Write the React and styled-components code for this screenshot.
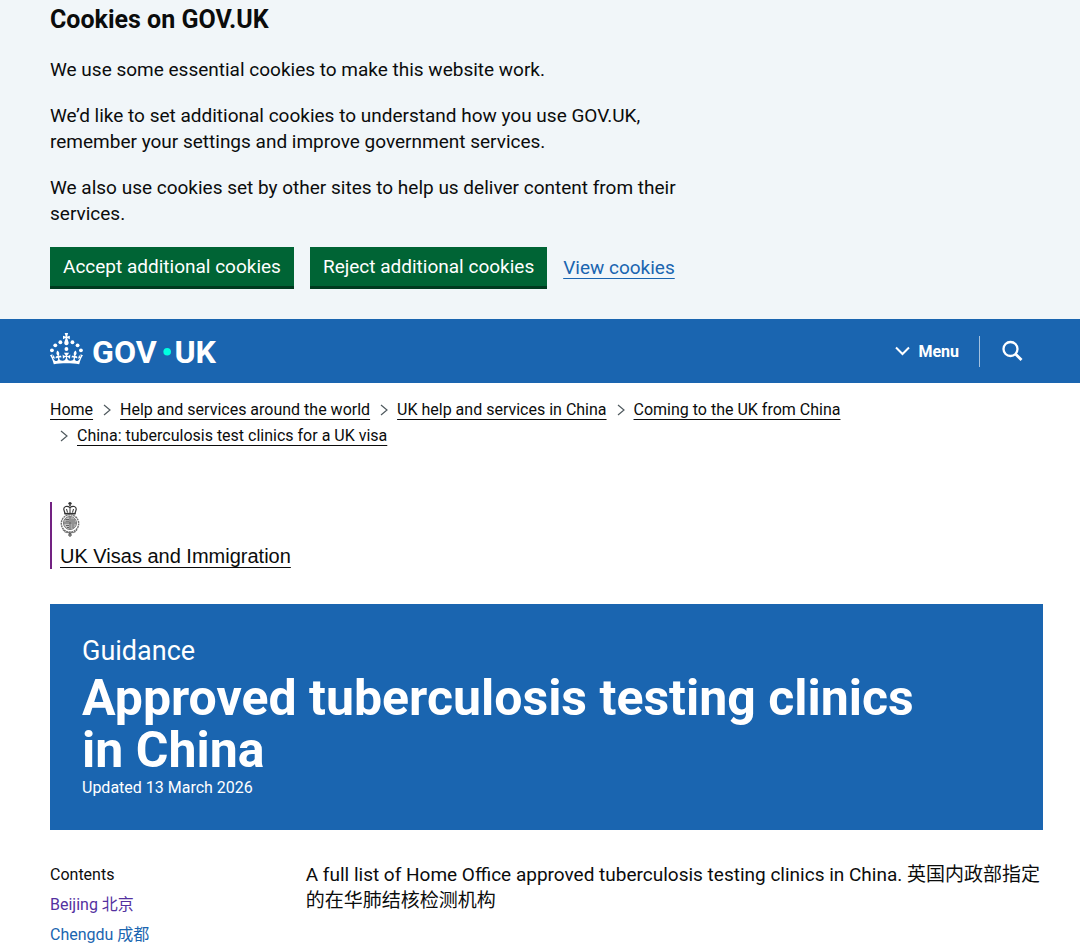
import styled, { createGlobalStyle } from 'styled-components';

const sans = "Roboto, 'Noto Sans CJK SC', sans-serif";

const GlobalStyle = createGlobalStyle`
  * {
    box-sizing: border-box;
  }
  body {
    margin: 0;
    background: #ffffff;
    color: #0b0c0c;
    font-family: ${sans};
    font-size: 19px;
    line-height: 26px;
  }
  h1, h2, p, ul, ol {
    margin: 0;
    padding: 0;
  }
  ul, ol {
    list-style: none;
  }
`;

const Container = styled.div`
  padding: 0 37px 0 50px;
`;

const CookieBanner = styled.section`
  padding: 7px 0 30px;
  background: #f1f6f9;
`;

const CookieTitle = styled.h2`
  margin-bottom: 24px;
  font-size: 25px;
  line-height: 26px;
`;

const CookieText = styled.div`
  width: 67%;
  display: flex;
  flex-direction: column;
  gap: 20px;
  margin-bottom: 20px;
`;

const ButtonGroup = styled.div`
  display: flex;
  align-items: center;
  gap: 16px;
`;

const Button = styled.button`
  height: 42px;
  padding: 0 13px;
  border: 0;
  border-bottom: 3px solid #003a1f;
  background: #006435;
  color: #ffffff;
  font-family: inherit;
  font-size: 19px;
  line-height: 26px;
`;

const Link = styled.a`
  color: ${({ $color }) => $color || '#1a65b0'};
  text-decoration: ${({ $plain }) => ($plain ? 'none' : 'underline')};
  text-decoration-thickness: 1px;
  text-underline-offset: 4px;
  text-decoration-skip-ink: none;
`;

const Header = styled.header`
  background: #1a65b0;
  color: #ffffff;
`;

const HeaderRow = styled(Container)`
  display: flex;
  justify-content: space-between;
  align-items: center;
  height: 64px;
`;

const LogoLink = styled.a`
  display: flex;
  color: #ffffff;
`;

const HeaderActions = styled.div`
  display: flex;
  align-items: center;
`;

const HeaderButton = styled.button`
  display: flex;
  align-items: center;
  gap: 8px;
  height: 31px;
  padding: 0 20px 0 21px;
  border: 0;
  border-left: ${({ $divided }) => ($divided ? '1px solid #a3c1df' : '0')};
  background: none;
  color: #ffffff;
  font-family: inherit;
  font-size: 16px;
  font-weight: 700;
`;

const Breadcrumbs = styled.ol`
  display: flex;
  flex-wrap: wrap;
  padding-top: 14px;
  font-size: 16px;
  line-height: 26px;
`;

const Crumb = styled.li`
  display: flex;
  align-items: center;
  gap: 9px;
  margin-left: ${({ $first }) => ($first ? '0' : '10px')};
`;

const Organisation = styled.div`
  width: fit-content;
  margin: 53px 0 35px;
  padding-left: 8px;
  border-left: 2px solid #732282;
  font-family: 'Liberation Sans', Arial, sans-serif;
  font-size: 20px;
`;

const Crest = styled.svg`
  display: block;
  margin-bottom: 6px;
`;

const TitleBlock = styled.header`
  padding: 34px 32px 30px;
  background: #1a65b0;
  color: #ffffff;
`;

const Kicker = styled.p`
  margin-bottom: 8px;
  font-size: 27px;
  line-height: 26px;
`;

const Title = styled.h1`
  max-width: 860px;
  font-size: 50px;
  line-height: 52px;
`;

const Updated = styled.p`
  font-size: 16px;
  line-height: 24px;
`;

const Columns = styled.div`
  display: grid;
  grid-template-columns: 1fr 3fr;
  column-gap: 10px;
  padding-top: 32px;
`;

const Contents = styled.nav`
  font-size: 16px;
`;

const ContentsTitle = styled.h2`
  font-size: 16px;
  font-weight: 400;
  line-height: 26px;
`;

const ContentsItem = styled.li`
  padding-top: 4px;
`;

const crumbs = [
  'Home',
  'Help and services around the world',
  'UK help and services in China',
  'Coming to the UK from China',
  'China: tuberculosis test clinics for a UK visa',
];

const GovLogo = () => (
  <svg width="168" height="40" viewBox="0 -4 324 77" fill="currentColor" role="img" aria-label="GOV.UK">
    <circle cx="20" cy="17.6" r="3.7" />
    <circle cx="10.2" cy="23.5" r="3.7" />
    <circle cx="3.7" cy="33.2" r="3.7" />
    <circle cx="31.7" cy="30.6" r="3.7" />
    <circle cx="43.3" cy="17.6" r="3.7" />
    <circle cx="53.2" cy="23.5" r="3.7" />
    <circle cx="59.7" cy="33.2" r="3.7" />
    <path d="M33.1,9.8c.2-.1.3-.3.5-.5l4.6,2.4v-6.8l-4.6,1.5c-.1-.2-.3-.3-.5-.5l1.9-5.9h-6.7l1.9,5.9c-.2.1-.3.3-.5.5l-4.6-1.5v6.8l4.6-2.4c.1.2.3.3.5.5l-2.6,8c-.9,2.8,1.2,5.7,4.1,5.7h0c3,0,5.1-2.9,4.1-5.7l-2.6-8ZM37,37.9s-3.4,3.8-4.1,6.1c2.2,0,4.2-.5,6.4-2.8l-.7,8.5c-2-2.8-4.4-4.1-5.7-3.8.1,3.1.5,6.7,5.8,7.2,3.7.3,6.7-1.5,7-3.8.4-2.6-2-4.3-3.7-1.6-1.4-4.5,2.4-6.1,4.9-3.2-1.9-4.5-1.8-7.7,2.4-10.9,3,4,2.6,7.3-1.2,11.1,2.4-1.3,6.2,0,4,4.6-1.2-2.8-3.7-2.2-4.2.2-.3,1.7.7,3.7,3,4.2,1.9.3,4.7-.9,7-5.9-1.3,0-2.4.7-3.9,1.7l2.4-8c.6,2.3,1.4,3.7,2.2,4.5.6-1.6.5-2.8,0-5.3l5,1.8c-2.6,3.6-5.2,8.7-7.3,17.5-7.4-1.1-15.7-1.7-24.5-1.7h0c-8.8,0-17.1.6-24.5,1.7-2.1-8.9-4.7-13.9-7.3-17.5l5-1.8c-.5,2.5-.6,3.7,0,5.3.8-.8,1.6-2.3,2.2-4.5l2.4,8c-1.5-1-2.6-1.7-3.9-1.7,2.3,5,5.2,6.2,7,5.9,2.3-.4,3.3-2.4,3-4.2-.5-2.4-3-3.1-4.2-.2-2.2-4.6,1.6-6,4-4.6-3.7-3.7-4.2-7.1-1.2-11.1,4.2,3.2,4.3,6.4,2.4,10.9,2.5-2.8,6.3-1.3,4.9,3.2-1.8-2.7-4.1-1-3.7,1.6.3,2.3,3.3,4.1,7,3.8,5.4-.5,5.7-4.2,5.8-7.2-1.3-.2-3.7,1-5.7,3.8l-.7-8.5c2.2,2.3,4.2,2.7,6.4,2.8-.7-2.3-4.1-6.1-4.1-6.1h10.6Z" />
    <g fontFamily="Roboto, sans-serif" fontWeight="700" fontSize="62">
      <text x="81" y="57">GOV</text>
      <text x="240" y="57">UK</text>
    </g>
    <circle cx="226" cy="36" r="7.3" fill="#00ffe0" />
  </svg>
);

const RoyalCrest = () => (
  <Crest width="20" height="35" viewBox="0 0 20 35" fill="none" stroke="#333333" aria-hidden="true">
    <path d="M10 0v4M8.300 1.500h3.400" strokeWidth="1.5" />
    <path d="M5 11.500 3.800 7.500C3.500 4.500 7 3.200 10 5.500 13 3.200 16.500 4.500 16.200 7.500L15 11.500Z" strokeWidth="1.2" />
    <path d="M7.500 10.500 6.500 7M12.500 10.500 13.500 7M10 5v6" />
    <path d="M4.500 11.700h11" strokeWidth="1.7" />
    <ellipse cx="10" cy="21.500" rx="8.700" ry="8.800" stroke="#6d6d6d" strokeWidth="1.400" strokeDasharray="2 .6" />
    <circle cx="10" cy="21" r="6.500" fill="#c4c4c4" stroke="#555" strokeWidth=".8" />
    <path d="M10 15v12M4 21h12M5.500 17.500h3.500M5.500 19.200h3.500M12 16.500v3.500M14 17v3M6 23.500h3M7 25.500h2M11.500 23h3M11.500 25h2.500" stroke="#555" strokeWidth=".9" />
    <path d="M3 28c2 3 4 3 7 2 3 1 5 1 7-2M8 30.500l2 1.500 2-1.500" stroke="#777" />
    <circle cx="10" cy="33" r="1.200" />
  </Crest>
);

const Chevron = () => (
  <svg width="8" height="12" viewBox="0 0 8 12" fill="none" stroke="#505a5f" strokeWidth="1.2" aria-hidden="true">
    <path d="M1 1l6 5-6 5" />
  </svg>
);

function App() {
  return (
    <>
      <GlobalStyle />
      <CookieBanner aria-label="Cookies on GOV.UK">
        <Container>
          <CookieTitle>Cookies on GOV.UK</CookieTitle>
          <CookieText>
            <p>We use some essential cookies to make this website work.</p>
            <p>
              We’d like to set additional cookies to understand how you use GOV.UK, remember your settings and improve
              government services.
            </p>
            <p>We also use cookies set by other sites to help us deliver content from their services.</p>
          </CookieText>
          <ButtonGroup>
            <Button type="button">Accept additional cookies</Button>
            <Button type="button">Reject additional cookies</Button>
            <Link href="#cookies">View cookies</Link>
          </ButtonGroup>
        </Container>
      </CookieBanner>

      <Header>
        <HeaderRow>
          <LogoLink href="#home">
            <GovLogo />
          </LogoLink>
          <HeaderActions>
            <HeaderButton type="button">
              <svg width="15" height="10" viewBox="0 0 15 10" fill="none" stroke="currentColor" strokeWidth="2" aria-hidden="true">
                <path d="M1 1.500l6.500 6.500L14 1.500" />
              </svg>
              Menu
            </HeaderButton>
            <HeaderButton type="button" aria-label="Search" $divided>
              <svg width="22" height="22" viewBox="0 0 22 22" fill="none" stroke="currentColor" strokeWidth="2.3" aria-hidden="true">
                <circle cx="9.500" cy="9" r="7" />
                <path d="M14.500 14l6 6" strokeWidth="2.8" />
              </svg>
            </HeaderButton>
          </HeaderActions>
        </HeaderRow>
      </Header>

      <Container>
        <nav aria-label="Breadcrumb">
          <Breadcrumbs>
            {crumbs.map((crumb, i) => (
              <Crumb key={crumb} $first={i === 0}>
                {i > 0 && <Chevron />}
                <Link href="#crumb" $color="#0b0c0c">
                  {crumb}
                </Link>
              </Crumb>
            ))}
          </Breadcrumbs>
        </nav>

        <main>
          <Organisation>
            <RoyalCrest />
            <Link href="#organisation" $color="#0b0c0c">
              UK Visas and Immigration
            </Link>
          </Organisation>

          <TitleBlock>
            <Kicker>Guidance</Kicker>
            <Title>Approved tuberculosis testing clinics in China</Title>
            <Updated>Updated 13 March 2026</Updated>
          </TitleBlock>

          <Columns>
            <Contents aria-label="Contents">
              <ContentsTitle>Contents</ContentsTitle>
              <ul>
                <ContentsItem>
                  <Link href="#beijing" $color="#54319f" $plain>
                    Beijing 北京
                  </Link>
                </ContentsItem>
                <ContentsItem>
                  <Link href="#chengdu" $plain>
                    Chengdu 成都
                  </Link>
                </ContentsItem>
              </ul>
            </Contents>
            <p>A full list of Home Office approved tuberculosis testing clinics in China. 英国内政部指定的在华肺结核检测机构</p>
          </Columns>
        </main>
      </Container>
    </>
  );
}

export default App;
